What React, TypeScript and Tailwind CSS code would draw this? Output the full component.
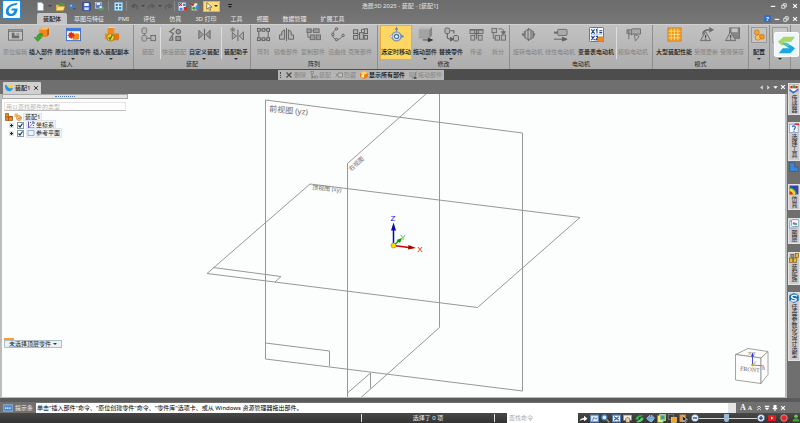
import React from "react";

type Node = React.ReactNode;

const GREY = "#6c6c6c";
const LIGHT = "#b4b4b4";

/* All glyphs are drawn on a 16 x 16 grid. */
const glyphs: Record<string, Node> = {
  editInPlace: (
    <>
      <rect x="0.500" y="3" width="15" height="11" fill="#c4c4c4" stroke={GREY} />
      <path d="M0.500 4.500h15" stroke={GREY} />
      <path d="M4 12V6h3v3h5v3z" fill={GREY} />
      <rect x="9" y="6.500" width="3" height="2" fill="#999" />
    </>
  ),
  insertPart: (
    <>
      <path d="M6 3l2-2h8v7l-2 2H6z" fill="#c85f10" />
      <path d="M6 3h8v7H6z" fill="#f08a1c" />
      <path d="M6 3l2-2h8l-2 2z" fill="#ffc35a" />
      <path d="M9 7C4 7 3 9 3 11.500L0 11l4 4.500L8.500 11l-2.500.5C6 10 7 9.500 9 9.500z" fill="#2fae2f" stroke="#157515" strokeWidth=".4" />
    </>
  ),
  createInPlace: (
    <>
      <rect x="0.500" y="1.500" width="15" height="13" fill="#fff" stroke="#3c6fc4" />
      <path d="M0.500 1.500h15v3H0.500z" fill="#3c7bdc" />
      <path d="M7 8l1-1h6v5l-1 1.500H7z" fill="#f08a1c" />
      <path d="M5.500 4.500l1 2 2-.7-.7 2 2 1-2 1 .7 2-2-.7-1 2-1-2-2 .7.7-2-2-1 2-1-.7-2 2 .7z" fill="#e3291d" />
    </>
  ),
  insertCopy: (
    <>
      <path d="M4 1h7v6H4z" fill="#f08a1c" />
      <path d="M4 1l1-1h7l-1 1z" fill="#ffd27a" />
      <path d="M10 8l1-1h5v6l-1 1h-5z" fill="#e5760f" />
      <path d="M1 7h5v6H1z" fill="#d99a1c" />
      <circle cx="7" cy="11" r="4" fill="#f2c83a" stroke="#87700f" strokeWidth=".8" />
      <path d="M5 11l1.500 2 2.500-5" stroke="#2b7d1f" fill="none" strokeWidth="1.300" />
    </>
  ),
  assemble: (
    <>
      <path d="M1 2c0-1.500 5-1.500 5 0v4c0 1.500-5 1.500-5 0z" fill={LIGHT} stroke={GREY} strokeWidth=".8" />
      <path d="M1 10c0-1.500 5-1.500 5 0v4c0 1.500-5 1.500-5 0z" fill={LIGHT} stroke={GREY} strokeWidth=".8" />
      <rect x="10.500" y="9" width="5" height="5.500" fill={LIGHT} stroke={GREY} />
      <path d="M3.500 7v2M6 12h4.500" stroke={GREY} />
    </>
  ),
  quick: (
    <>
      <path d="M8 1L3 5l4 2-4 6M2 14h4V10" stroke={GREY} fill="none" strokeWidth="1.300" />
      <circle cx="12" cy="5" r="2.500" fill="#999" stroke="#5f5f5f" />
      <rect x="9.500" y="10" width="5" height="4.500" fill="#999" stroke="#5f5f5f" />
    </>
  ),
  custom: (
    <>
      <path d="M8 2v12" stroke="#666" strokeWidth="1.300" />
      <path d="M2 3.500v9L6.500 8zM14 3.500v9L9.500 8z" fill="#999" stroke="#666" />
    </>
  ),
  assistant: (
    <>
      <path d="M4 0v6M1 3h6M2 1l4 4M6 1L2 5" stroke={GREY} strokeWidth=".8" />
      <path d="M9.500 3v12" stroke={GREY} strokeWidth="1.200" />
      <path d="M3.500 6v7L8 9.500zM15.500 5v9L11 9.500z" fill="#aaa" stroke={GREY} />
    </>
  ),
  pattern: (
    <g fill={LIGHT} stroke="#606060">
      <path d="M3 3h10v10H3z" fill="none" />
      <rect x="1.500" y="1.500" width="3" height="3" />
      <rect x="6.500" y="1.500" width="3" height="3" />
      <rect x="11.500" y="1.500" width="3" height="3" />
      <rect x="1.500" y="11.500" width="3" height="3" />
      <rect x="6.500" y="11.500" width="3" height="3" />
      <rect x="11.500" y="11.500" width="3" height="3" />
    </g>
  ),
  mirror: (
    <g fill={LIGHT} stroke="#606060">
      <path d="M8 1v14" />
      <path d="M6 3v10H0.500V8.500h2.500V5z" />
      <path d="M10 3v10h5.500V8.500H13V5z" />
    </g>
  ),
  copy: (
    <g fill="#999" stroke={GREY}>
      <rect x="1" y="2" width="4.500" height="4" />
      <rect x="8" y="2" width="6" height="4" />
      <rect x="4.500" y="8.500" width="5" height="5" />
      <rect x="11" y="8.500" width="4.500" height="5" />
      <path d="M2 6v5h2.500M8 4H5" fill="none" />
    </g>
  ),
  curve: (
    <g fill={LIGHT} stroke="#606060">
      <path d="M7 2C1 6 2 11 6 13c3 1 6-1 8-4" fill="none" />
      <circle cx="7" cy="2" r="1.300" />
      <circle cx="3" cy="8" r="1.300" />
      <circle cx="7" cy="13.500" r="1.300" />
      <circle cx="14" cy="9" r="1.300" />
    </g>
  ),
  clone: (
    <g fill={LIGHT} stroke="#606060">
      <rect x="0.500" y="3" width="4.500" height="4" />
      <rect x="0.500" y="9" width="4.500" height="4" />
      <rect x="7" y="6" width="4" height="7" />
      <rect x="12" y="2" width="3.500" height="5" />
      <rect x="12" y="9" width="3.500" height="4" />
      <path d="M5 8h2M9 6V2.500h3" fill="none" />
    </g>
  ),
  moveOnSelect: (
    <>
      <path d="M8 0v11M8 10h8" stroke="#7791b5" strokeWidth="1.200" />
      <path d="M6 3L8 0l2 3z" fill="#5f86bd" />
      <circle cx="8" cy="10" r="4.800" fill="#eadca0" stroke="#7b94b4" strokeWidth="1.500" />
      <circle cx="8" cy="10" r="2.200" fill="#eaf2ff" stroke="#3f6bb0" strokeWidth="1.200" />
      <path d="M13 8l3 2-3 2z" fill="#5f86bd" />
      <circle cx="2.500" cy="10" r="1.200" fill="#fff" stroke="#6d89b0" strokeWidth=".6" />
    </>
  ),
  drag: (
    <>
      <path d="M1 3l3-3h11v9l-3 3H1z" fill="#858585" />
      <path d="M1 3l3-3h11l-3 3z" fill="#b9b9b9" />
      <rect x="1" y="3" width="11" height="8.500" fill="#a2a2a2" />
      <path d="M5 13.800h7M11 12l4.500 1.800-4.500 1.800z" stroke="#333" fill="#333" strokeWidth=".9" />
    </>
  ),
  replace: (
    <g fill={LIGHT} stroke="#606060">
      <path d="M1 2c0-1.300 5-1.300 5 0v4c0 1.300-5 1.300-5 0z" />
      <path d="M10 10c0-1.300 5.500-1.300 5.500 0v4c0 1.300-5.500 1.300-5.500 0z" />
      <path d="M3.500 7v4c0 2 2 2 4 2M7 4h3.500v3" fill="none" strokeWidth="1.200" />
      <path d="M7 11l3 2-3 2z" fill="#606060" />
    </g>
  ),
  transfer: (
    <g fill={LIGHT} stroke={GREY}>
      <rect x="1" y="3" width="5" height="4" />
      <rect x="10" y="3" width="5" height="4" />
      <rect x="2" y="9" width="4" height="5" />
      <rect x="10" y="9" width="4" height="5" />
      <path d="M1 3h14M8 3v10M5 7h6" strokeWidth="1.500" />
    </g>
  ),
  disperse: (
    <g fill={LIGHT} stroke={GREY}>
      <rect x="1" y="1.500" width="5" height="4.500" />
      <rect x="4.500" y="9" width="4.500" height="5" />
      <rect x="11" y="8.500" width="4.500" height="5.500" />
      <path d="M2.500 6v6h2M8 2h3c2 0 2.500 2 2.500 4" fill="none" />
      <path d="M11 5h4.500l-2.200 2.800z" fill={GREY} />
    </g>
  ),
  rotary: (
    <>
      <path d="M1 8h14" stroke={GREY} strokeWidth="2.200" />
      <path d="M3.500 5l3-2h4l3 2v6l-3 2h-4l-3-2z" fill="#8e8e8e" stroke={GREY} />
      <path d="M6 4v8M9 3.500v9" stroke="#bdbdbd" />
      <path d="M8 1v2M8 13v2" stroke={GREY} strokeWidth="1.500" />
    </>
  ),
  linear: (
    <>
      <rect x="5" y="2.500" width="10" height="6.500" rx="1" fill="#aaa" stroke={GREY} />
      <path d="M1 6h4" stroke={GREY} strokeWidth="2.200" />
      <path d="M1 13h10M10 11l5 2-5 2z" stroke="#606060" fill="#606060" />
    </>
  ),
  table: (
    <>
      <rect x="0.500" y="0.500" width="15" height="15" rx="1" fill="#f6faff" stroke="#4a73ad" />
      <path d="M2 8h12" stroke="#9bb4d8" strokeWidth=".6" />
      <path d="M2.500 2.500l3.500 4.500M6 2.500L2.500 7M2.500 9.500L6 14M6 9.500L2.500 14M7.500 3.500L8.500 2.500V7M7.500 10h1.500v1.500l-1.500 2h2M11 4h3M11 6h3" stroke="#1b3d87" fill="none" strokeWidth="1.100" />
      <path d="M9 12l1-1.500h6V14l-1 2H9z" fill="#f08a1c" stroke="#a9570b" strokeWidth=".4" />
    </>
  ),
  simulate: (
    <>
      <path d="M1 3h4l2-1h8.500v5.500H5L1 7z" fill="#aaa" stroke={GREY} />
      <path d="M3 3v10M6 3v6M9 8l5 2-4 5z" fill="#c2c2c2" stroke="#6f6f6f" />
    </>
  ),
  grid: (
    <>
      <rect x="1" y="1" width="14" height="14" fill="#f39a1d" />
      <path d="M1 1h14v14H1zM4.500 1v14M8 1v14M11.500 1v14M1 4.500h14M1 8h14M1 11.500h14" fill="none" stroke="#ffe78c" strokeWidth=".8" />
      <path d="M1 1h14v14H1z" fill="none" stroke="#c96a0b" strokeWidth="1" />
    </>
  ),
  limitUpdate: (
    <>
      <path d="M1.500 14.500L7 5l5.500 9.500z" fill="#b5b5b5" stroke={GREY} />
      <path d="M7 8.500v3M7 12.500v1" stroke="#4d4d4d" strokeWidth="1.300" />
      <path d="M4 8c0-4 4-5 8-5" stroke={GREY} fill="none" strokeWidth="1.500" />
      <path d="M11 0l5 3-5 3z" fill={GREY} />
    </>
  ),
  limitSave: (
    <>
      <rect x="5" y="1" width="10.500" height="11" fill="#868686" stroke="#6f6f6f" />
      <rect x="7" y="1.500" width="6.500" height="4" fill="#c4c4c4" />
      <path d="M0.500 14.500L6 5l5.500 9.500z" fill="#b5b5b5" stroke={GREY} />
      <path d="M6 8.500v3M6 12.500v1" stroke="#4d4d4d" strokeWidth="1.300" />
    </>
  ),
  config: (
    <>
      <path d="M3 3l2.500-1L8 3v4L5.500 8 3 7z" fill="#f7a431" stroke="#b0670c" strokeWidth=".6" />
      <path d="M4 9l3.500-1.500L10 9v3.500L7 14l-3-1z" fill="#ffc052" stroke="#b0670c" strokeWidth=".6" />
      <circle cx="11.500" cy="10" r="2.800" fill="#f59722" stroke="#b0670c" strokeWidth=".6" />
    </>
  ),
  doc: <path d="M3 1h7l3 3v11H3z" fill="#fff" stroke="#9db4cc" />,
  folder: (
    <>
      <path d="M0 5h5l1 2h7v8H0z" fill="#e9b63a" />
      <path d="M3 8h13l-3 7H0z" fill="#ffe28a" stroke="#a97b12" strokeWidth=".6" />
      <path d="M6 5c1-4 5-4 7-2l1.500-1L15 7l-4.500-1 1-1C10 4 8 4 8 6z" fill="#49a633" />
    </>
  ),
  ball: (
    <>
      <circle cx="7" cy="8" r="4.500" fill="#3d7fbd" />
      <circle cx="5.500" cy="6.500" r="1.500" fill="#a8d5ff" />
      <path d="M9 12h5" stroke="#333" />
    </>
  ),
  save: (
    <>
      <rect x="1" y="1" width="14" height="14" rx="1" fill="#3f62c4" stroke="#203b8c" />
      <rect x="4" y="2" width="8" height="5" fill="#fff" />
      <rect x="4" y="9.500" width="8" height="5" fill="#cdd9f2" />
    </>
  ),
  saveAs: (
    <>
      <rect x="1" y="1" width="10" height="10" fill="#5a7bd0" stroke="#dfe8ff" />
      <rect x="3" y="2" width="6" height="3" fill="#fff" />
      <path d="M6 11l8-4 2 5-6 4z" fill="#52b152" />
      <circle cx="10" cy="9" r="3" fill="#e8f0ff" stroke="#3460a0" />
    </>
  ),
  panel: (
    <>
      <rect x="0.500" y="0.500" width="15" height="15" rx="1" fill="#d6ecf8" stroke="#4f90b5" />
      <path d="M3 3h4v4H3zM9 3h4v4H9zM3 9h4v4H3zM9 9h4v4H9z" fill="#3186b8" />
    </>
  ),
  undo: <path d="M13 13c2-6-3-9-8-6M8 3L3 8l6 2" stroke="#555" fill="none" strokeWidth="2.200" />,
  redo: <path d="M3 13c-2-6 3-9 8-6M8 3l5 5-6 2" stroke="#5b5b5b" fill="none" strokeWidth="2.200" />,
  colorA: (
    <>
      <rect x="1" y="1" width="13" height="14" fill="#eef4ff" stroke="#7a93be" />
      <path d="M2 2l5 5M7 2L2 7" stroke="#d8281d" strokeWidth="2" />
      <path d="M9 3h4v4H9zM3 10h5v4H3z" fill="#3f7fd0" />
      <path d="M10 9h6v6h-6z" fill="#d8281d" />
    </>
  ),
  colorB: (
    <>
      <path d="M3 2h10v13H3z" fill="#fff" stroke="#888" />
      <path d="M0 2h9L5 8z" fill="#d8281d" />
      <circle cx="7" cy="11" r="3" fill="#38a13f" />
      <path d="M10 6h5v8h-5z" fill="#3d8fd8" />
    </>
  ),
  cursor: <path d="M5 1v12l3-3 2 5 2-1-2-5h4z" fill="#fff" stroke="#333" />,
  partTab: (
    <>
      <path d="M0 2c5 0 5 3 6 5l10 1c-1 6-7 8-12 5C1 11 0 8 0 2z" fill="#2493e8" />
      <circle cx="11" cy="5" r="4" fill="#ffd21f" />
    </>
  ),
  cross: <path d="M3 3l10 10M13 3L3 13" stroke="currentColor" strokeWidth="2.300" />,
  link: (
    <g fill="#bbb" stroke="#666">
      <rect x="2" y="1" width="5" height="4" />
      <rect x="10" y="10" width="5" height="4" />
      <path d="M4 5v7h6M2 14h4" fill="none" strokeWidth="1.500" />
    </g>
  ),
  hide: <path d="M1 5l4 3-4 3M6 4h9v8H6z" stroke="#777" fill="#c2c2c2" strokeWidth="1.500" />,
  showAll: (
    <>
      <path d="M0 4l8-4 8 4v8l-8 4-8-4z" fill="#f07c12" />
      <path d="M0 4l8-4 8 4-8 4z" fill="#ffd166" />
      <path d="M3 7h5v6H3z" fill="#fff3cf" />
    </>
  ),
  asmRoot: (
    <>
      <path d="M1 1h6v6h8v8H1z" fill="#ed8a1d" stroke="#8d470a" strokeWidth="1.300" />
      <path d="M1 8h14M7 8v7" stroke="#8d470a" strokeWidth="1.300" />
    </>
  ),
  asmNode: (
    <>
      <path d="M1 1h7v7H1z" fill="#f1b563" />
      <circle cx="10" cy="10" r="5" fill="#f7d18a" stroke="#c7781f" strokeWidth="1.300" />
      <path d="M8 10l2 2 3-4" stroke="#b95510" fill="none" strokeWidth="1.500" />
    </>
  ),
  coords: (
    <>
      <path d="M3 1v13h12" stroke="#6655b8" fill="none" strokeWidth="2" />
      <path d="M4 13l8-9" stroke="#ae448e" strokeWidth="1.500" />
      <path d="M10 2h4v4M6 3h2M12 9h2" stroke="#3a55bd" fill="none" strokeWidth="2" />
    </>
  ),
  plane: <path d="M2 3h12v10H2z" fill="#eef3ff" stroke="#7f9ada" strokeWidth="1.500" />,
  sensor: (
    <>
      <path d="M0.500 1h15v11H0.500z" fill="#fff" stroke="#9d9d9d" />
      <path d="M2 3h4v4H2z" fill="#d8281d" />
      <path d="M6 2h4v5H6z" fill="#35a845" />
      <path d="M10 3h4v4h-4z" fill="#d8281d" />
      <path d="M1 9l6 5 8-6" stroke="#3a6cc6" fill="none" strokeWidth="2.500" />
    </>
  ),
  pick: (
    <>
      <rect x="0.500" y="2" width="14" height="13" fill="#f4f8ff" stroke="#6a92cc" />
      <path d="M9 0.500h7v3H9z" fill="#d93a30" />
      <path d="M5 6c3-3 7 0 4 3l-1 2M8 12.500v1.500" stroke="#3566b3" strokeWidth="2" fill="none" />
    </>
  ),
  shape: <path d="M1 1h8v7h5c2 2 1 6 0 7H1z" fill="#3f86cf" stroke="#1d569b" />,
  rainbow: (
    <>
      <rect x="1" y="1" width="14" height="14" fill="#3340b4" />
      <path d="M1 15V4c6 0 11 5 11 11z" fill="#3fae5c" />
      <path d="M1 15V6c5 0 9 4 9 9z" fill="#ffd72c" />
      <path d="M1 15v-5c3 0 5 2 5 5z" fill="#e52c1c" />
    </>
  ),
  layers: (
    <>
      <rect x="0.500" y="3.500" width="11" height="11" rx="2" fill="#d9ecff" stroke="#4c86c0" />
      <rect x="4" y="1" width="11.500" height="11" rx="2" fill="#f3fbff" stroke="#4c86c0" />
      <circle cx="8" cy="7" r="2" fill="#e05a4c" />
      <circle cx="11" cy="8" r="2" fill="#49b35f" />
    </>
  ),
  family: (
    <g stroke="#554312" strokeWidth=".8">
      <rect x="0.500" y="8" width="5.500" height="7" fill="#e7b43c" />
      <rect x="7" y="8" width="5.500" height="7" fill="#e7b43c" />
      <rect x="3" y="2" width="5" height="5" fill="#8994a5" />
      <rect x="10" y="1" width="5.500" height="6" fill="#e7b43c" />
    </g>
  ),
  swirl: (
    <>
      <path d="M8 0l7.500 4v8L8 16 .5 12V4z" fill="#0b6fb8" />
      <path d="M13 5C8 2 3 4 4.500 7s8 1 7 4-6 2-8.500 0" stroke="#fff" fill="none" strokeWidth="2.200" />
    </>
  ),
  arrowRight: <path d="M1 13c1-5 4-6 8-6V3l6 5.500L9 13v-3c-4 0-6 0-8 3z" fill="#fff" />,
  fit: (
    <>
      <rect x="1" y="2" width="14" height="12" fill="#dcebfb" stroke="#5b8dc8" strokeWidth="2" />
      <path d="M4 12l3-6 3 3 3-2" stroke="#3a6cc6" fill="none" strokeWidth="1.500" />
    </>
  ),
  zoomGlass: (
    <>
      <circle cx="6" cy="6" r="4.500" fill="#d6ecff" stroke="#3c7fc4" strokeWidth="2" />
      <path d="M9.500 9.500L15 15" stroke="#c98b4a" strokeWidth="2.500" />
    </>
  ),
  fitAll: (
    <>
      <rect x="1" y="2" width="14" height="12" fill="#f2f8ff" stroke="#4d86cb" strokeWidth="2" />
      <path d="M4 5l8 6M12 5l-8 6" stroke="#2c5da8" strokeWidth="2" />
    </>
  ),
  pan: (
    <>
      <rect x="1" y="2" width="14" height="9" fill="#eee" stroke="#8aa" />
      <path d="M5 15V8l2-2 5 2v7z" fill="#f2cfa4" stroke="#6b4a20" />
    </>
  ),
  orbit: (
    <>
      <path d="M1 10c0-7 9-9 14-7l-4 2c-4 0-5 3-4 5z" fill="#32b04c" />
      <path d="M15 6c0 7-8 10-13 8l4-3c3 0 4-2 4-4z" fill="#5fd06b" />
    </>
  ),
  lookAt: <path d="M1 8l6-6v4h3V2l5 5-5 7v-4H8v4z" fill="#5ea3e6" stroke="#d2e8ff" />,
  views: (
    <>
      <rect x="1" y="3" width="10" height="12" fill="#ffe36e" stroke="#6e9f30" />
      <rect x="5" y="1" width="10" height="11" fill="#7ecb55" stroke="#e4ffd8" />
      <circle cx="10" cy="6" r="3" fill="#3e8ad0" />
    </>
  ),
  style: (
    <>
      <rect x="1" y="1" width="9" height="9" fill="#3c3c3c" stroke="#999" />
      <rect x="6" y="6" width="9" height="9" fill="#f2a81e" stroke="#ffe1a0" />
    </>
  ),
  selectStyle: (
    <>
      <rect x="1" y="1" width="11" height="13" fill="#ed9430" />
      <path d="M6 3v10l3-2 2 4 2-1-2-4h4z" fill="#222" stroke="#eee" />
    </>
  ),
  minus: (
    <>
      <circle cx="8" cy="8" r="7" fill="#e8f1fb" stroke="#55759c" />
      <path d="M4 8h8" stroke="#1d3f70" strokeWidth="2.500" />
    </>
  ),
  plus: (
    <>
      <circle cx="8" cy="8" r="7" fill="#e8f1fb" stroke="#55759c" />
      <path d="M4 8h8M8 4v8" stroke="#1d3f70" strokeWidth="2.500" />
    </>
  ),
  video: (
    <>
      <rect x="0" y="2" width="16" height="12" rx="2" fill="#e3191c" />
      <path d="M6 5l5 3-5 3z" fill="#fff" />
    </>
  ),
  record: <circle cx="8" cy="8" r="6.500" fill="#e02a2a" stroke="#f3a5a5" strokeWidth="1.500" />,
  person: (
    <>
      <circle cx="8" cy="4.500" r="3.500" fill="#6cc644" />
      <path d="M1 15c0-8 14-8 14 0z" fill="#4ea32e" />
    </>
  ),
  minimize: <path d="M2 9h12" stroke="#fff" strokeWidth="3" />,
  restore: <path d="M6 6V2h8v8h-4M2 6h8v8H2z" stroke="#fff" fill="none" strokeWidth="2" />,
  close: <path d="M3 3l10 10M13 3L3 13" stroke="#fff" strokeWidth="3" />,
  left: <path d="M12 1L4 8l8 7z" fill="#ddd" />,
  right: <path d="M4 1l8 7-8 7z" fill="#ddd" />,
  down: <path d="M1 4h14l-7 8z" fill="#fff" />,
  collapse: <path d="M3 7l5-4 5 4M3 13l5-4 5 4" stroke="#fff" fill="none" strokeWidth="2" />,
  menuDown: <path d="M2 2h12v3H2zM2 7h12l-6 7z" fill="#fff" />,
  pin: <path d="M4 0h8v8h2v3H9.500v5h-3v-5H2V8h2z" fill="#fff" />,
  promptBar: (
    <>
      <rect x="0" y="3" width="16" height="10" fill="#4f86c8" stroke="#b9d5f3" />
      <path d="M3 8h10" stroke="#fff" strokeWidth="2" strokeDasharray="2 1" />
    </>
  ),
};

function Icon({ name, className = "size-[8px]" }: { name: string; className?: string }) {
  return (
    <svg viewBox="0 0 16 16" className={`shrink-0 ${className}`} aria-hidden="true">
      {glyphs[name]}
    </svg>
  );
}

function Caret({ color = "#333" }: { color?: string }) {
  return (
    <svg viewBox="0 0 4 2" className="h-[2px] w-[4px] shrink-0" aria-hidden="true">
      <path d="M0 0h4L2 2z" fill={color} />
    </svg>
  );
}

type Tool = { label: string; icon: string; w: string; on?: boolean; menu?: boolean; active?: boolean; rule?: boolean };

const groups: { name: string; w: string; tools: Tool[] }[] = [
  {
    name: "插入",
    w: "w-[134px]",
    tools: [
      { label: "原位编辑", icon: "editInPlace", w: "w-[26px]" },
      { label: "插入部件", icon: "insertPart", w: "w-[26px]", on: true, menu: true },
      { label: "原位创建零件", icon: "createInPlace", w: "w-[38px]", on: true, menu: true },
      { label: "插入装配副本", icon: "insertCopy", w: "w-[38px]", on: true, menu: true },
    ],
  },
  {
    name: "装配",
    w: "w-[117px]",
    tools: [
      { label: "装配", icon: "assemble", w: "w-[24px]", rule: true },
      { label: "快速装配", icon: "quick", w: "w-[26px]" },
      { label: "自定义装配", icon: "custom", w: "w-[34px]", on: true, menu: true, rule: true },
      { label: "装配助手", icon: "assistant", w: "w-[28px]", on: true, menu: true },
    ],
  },
  {
    name: "阵列",
    w: "w-[127px]",
    tools: [
      { label: "阵列", icon: "pattern", w: "w-[20px]" },
      { label: "镜像部件", icon: "mirror", w: "w-[26px]" },
      { label: "复制部件", icon: "copy", w: "w-[28px]" },
      { label: "沿曲线", icon: "curve", w: "w-[20px]" },
      { label: "克隆部件", icon: "clone", w: "w-[26px]" },
    ],
  },
  {
    name: "修改",
    w: "w-[132px]",
    tools: [
      { label: "选定时移动", icon: "moveOnSelect", w: "w-[32px]", on: true, active: true },
      { label: "拖动部件", icon: "drag", w: "w-[26px]", on: true, menu: true },
      { label: "替换零件", icon: "replace", w: "w-[26px]", on: true, menu: true },
      { label: "传递", icon: "transfer", w: "w-[24px]" },
      { label: "拆分", icon: "disperse", w: "w-[20px]" },
    ],
  },
  {
    name: "电动机",
    w: "w-[143px]",
    tools: [
      { label: "旋转电动机", icon: "rotary", w: "w-[32px]" },
      { label: "线性电动机", icon: "linear", w: "w-[32px]" },
      { label: "变量表电动机", icon: "table", w: "w-[40px]", on: true, rule: true },
      { label: "模拟电动机", icon: "simulate", w: "w-[32px]" },
    ],
  },
  {
    name: "模式",
    w: "w-[96px]",
    tools: [
      { label: "大型装配性能", icon: "grid", w: "w-[38px]", on: true },
      { label: "受限更新", icon: "limitUpdate", w: "w-[26px]" },
      { label: "受限保存", icon: "limitSave", w: "w-[26px]" },
    ],
  },
];

function ToolButton({ tool }: { tool: Tool }) {
  return (
    <>
      <button
        type="button"
        disabled={!tool.on}
        className={`flex h-[35px] shrink-0 flex-col items-center whitespace-nowrap pt-[2px] ${tool.w} ${
          tool.on ? "font-medium text-[#151515]" : "text-[#828282]"
        } ${tool.active ? "bg-[#fdd663] outline outline-1 -outline-offset-1 outline-[#e0b040]" : ""}`}
      >
        <Icon name={tool.icon} className="size-[15px]" />
        <span className="mt-[6px] leading-[8px]">{tool.label}</span>
        {tool.menu && (
          <span className="mt-[2px]">
            <Caret />
          </span>
        )}
      </button>
      {tool.rule && <span className="mt-[2px] h-[32px] w-px shrink-0 bg-[#dedede]" />}
    </>
  );
}

function Ribbon() {
  return (
    <div className="flex h-[45px] shrink-0 overflow-hidden border-t border-[#d0d0d0] bg-linear-to-b from-[#c2c2c2] to-[#adadad]">
      {groups.map((g) => (
        <section key={g.name} aria-label={g.name} className={`flex shrink-0 flex-col border-r border-[#8e8e8e] ${g.w}`}>
          <div className="flex pl-[2px]">
            {g.tools.map((t) => (
              <ToolButton key={t.label} tool={t} />
            ))}
          </div>
          <h2 className="text-center leading-[8px] text-[#222]">{g.name}</h2>
        </section>
      ))}
      <div className="flex w-[21px] shrink-0 flex-col items-center border-r border-[#8e8e8e] pt-[2px]">
        <button type="button" className="flex flex-col items-center font-medium text-[#151515]">
          <span className="border border-[#999] bg-[#c6c6c6]">
            <Icon name="config" className="size-[14px]" />
          </span>
          <span className="mt-[5px] leading-[8px]">配置</span>
          <span className="mt-[2px]">
            <Caret />
          </span>
        </button>
      </div>
      <div className="relative flex w-[21px] shrink-0 flex-col items-center border-r border-[#8e8e8e] pt-[2px]">
        <span className="size-[16px] border border-[#999] bg-[#c6c6c6]" />
        <span className="mt-[15px]">
          <Caret />
        </span>
        <div className="absolute top-[7px] left-[4px] size-[25px] rounded-[2px] border border-white bg-[#eef6fa]">
          <svg viewBox="0 0 24 24" className="size-full" aria-hidden="true">
            <path d="M9 4h12l-4 5H9l3 2-5 2-4-4z" fill="#a5d86a" />
            <path d="M12 10l8 5-4 2-9-6z" fill="#4cc3b4" />
            <path d="M16 13l5 3-5 5H4l4-5h8l-3-2z" fill="#1ba7e4" />
          </svg>
        </div>
      </div>
    </div>
  );
}

const tabs = ["装配体", "草图与特征", "PMI", "评估", "仿真", "3D 打印", "工具", "视图", "数据管理", "扩展工具"];

function QuickButton({ icon, label, w }: { icon: string; label: string; w: string }) {
  return (
    <button type="button" aria-label={label} className={`flex shrink-0 items-center justify-center ${w}`}>
      <Icon name={icon} className="size-[9px]" />
    </button>
  );
}

function Header() {
  return (
    <header className="relative shrink-0 bg-linear-to-b from-[#6b6b6b] to-[#777]">
      <div className="flex h-[12px] items-center">
        <div className="h-full min-w-0 flex-1 basis-0">
          <div className="flex h-full items-center pl-[35px]">
            <QuickButton icon="doc" label="新建" w="w-[10px]" />
            <span className="flex w-[10px] justify-center"><Caret color="#444" /></span>
            <QuickButton icon="folder" label="打开" w="w-[10px]" />
            <QuickButton icon="ball" label="在线" w="w-[14px]" />
            <QuickButton icon="save" label="保存" w="w-[14px]" />
            <QuickButton icon="saveAs" label="另存为" w="w-[12px]" />
            <span className="mx-[3px] h-[10px] w-px bg-[#8a8a8a]" />
            <QuickButton icon="panel" label="面板" w="w-[12px]" />
            <span className="mx-[2px] h-[10px] w-px bg-[#8a8a8a]" />
            <QuickButton icon="undo" label="撤销" w="w-[10px]" />
            <span className="flex w-[7px] justify-center"><Caret color="#444" /></span>
            <QuickButton icon="redo" label="重做" w="w-[10px]" />
            <span className="flex w-[7px] justify-center"><Caret color="#444" /></span>
            <QuickButton icon="redo" label="重复" w="w-[10px]" />
            <span className="mx-[1px] h-[10px] w-px bg-[#8a8a8a]" />
            <QuickButton icon="colorA" label="颜色" w="w-[12px]" />
            <QuickButton icon="colorB" label="样式" w="w-[12px]" />
            <span className="ml-[3px] flex h-[11px] w-[17px] items-center justify-between border border-[#e2b33c] bg-[#fddb76] pr-[1px]">
              <QuickButton icon="cursor" label="选择" w="w-[9px]" />
              <Caret />
            </span>
            <span className="ml-[8px] border-t border-[#222] pt-[1px]"><Caret color="#222" /></span>
          </div>
        </div>
        <h1 className="leading-[12px] text-[#e6e6e6]">浩辰3D 2025 - 装配 - [装配1]</h1>
        <div className="min-w-0 flex-1 basis-0">
          <div className="flex items-center justify-end gap-[5px] pr-[2px]">
            <button type="button" aria-label="最小化"><Icon name="minimize" className="size-[6px]" /></button>
            <button type="button" aria-label="还原"><Icon name="restore" className="size-[6px]" /></button>
            <button type="button" aria-label="关闭"><Icon name="close" className="size-[6px]" /></button>
          </div>
        </div>
      </div>
      <div className="flex h-[12px] items-end">
        <nav className="flex flex-1 pl-[37px]">
          {tabs.map((t, i) => (
            <button
              key={t}
              type="button"
              className={`h-[11px] ${
                i === 0 ? "rounded-t-[2px] bg-[#c6c6c6] px-[6px] font-medium text-[#222]" : "px-[7px] text-[#ececec]"
              }`}
            >
              {t}
            </button>
          ))}
        </nav>
        <div className="flex h-[11px] items-center gap-[3px] pr-[2px]">
          <button type="button" aria-label="帮助" className="size-[7px] bg-[#2f6fc4] font-bold text-white">?</button>
          <button type="button" aria-label="最小化文档"><Icon name="minimize" className="size-[6px]" /></button>
          <button type="button" aria-label="还原文档"><Icon name="restore" className="size-[6px]" /></button>
          <button type="button" aria-label="关闭文档"><Icon name="close" className="size-[6px]" /></button>
        </div>
      </div>
      <div className="absolute top-0 left-[2px] size-[19px] rounded-[2px] border border-[#1c8edb] bg-white">
        <svg viewBox="0 0 18 18" className="size-full" aria-hidden="true">
          <path d="M15.500 2C8 2 3 6 3 11c0 4 3 5 6 5 4 0 6-3 6.500-8H9.500l-1 2h3.500c-.5 2-1.500 3.500-3 3.500S6 12.500 6 10.500C6 7 9 4.500 14 4.500z" fill="#168de0" />
        </svg>
      </div>
    </header>
  );
}

const commands = [
  { icon: "cross", label: "删除" },
  { icon: "link", label: "装配" },
  { icon: "hide", label: "隐藏" },
  { icon: "showAll", label: "显示所有部件", on: true },
  { icon: "drag", label: "拖动部件" },
];

function CommandStrip() {
  return (
    <div className="flex h-[11px] shrink-0 items-end bg-[#4d4d4d]">
      <div className="ml-[278px] flex h-[10px] items-center gap-[4px] bg-[#b5b5b5] px-[2px]">
        <span className="h-[6px] border-l border-dotted border-[#444]" />
        {commands.map((c) => (
          <button
            key={c.label}
            type="button"
            disabled={!c.on}
            className={`flex items-center gap-[1px] ${c.on ? "font-medium text-black" : "text-[#858585]"}`}
          >
            <Icon name={c.icon} className="size-[8px] text-[#4a4a4a]" />
            {c.label}
          </button>
        ))}
      </div>
    </div>
  );
}

function Expand() {
  return (
    <button type="button" aria-label="展开" className="flex size-[5px] items-center justify-center bg-[#dbe3e8]">
      <svg viewBox="0 0 5 5" className="size-[5px] shrink-0" aria-hidden="true">
        <path d="M1 2.500h3M2.500 1v3" stroke="#222" />
      </svg>
    </button>
  );
}

function TreeRow({ icon, label }: { icon: string; label: string }) {
  return (
    <li className="flex h-[8px] items-center pl-[5px]">
      <Expand />
      <label className="ml-[3px] flex items-center">
        <span className="relative flex">
          <input type="checkbox" defaultChecked className="size-[7px] appearance-none border border-[#8299a8] bg-white" />
          <svg viewBox="0 0 7 7" className="pointer-events-none absolute inset-0 size-[7px]" aria-hidden="true">
            <path d="M1.500 3.500L3 5l2.500-3.500" stroke="#16315c" fill="none" strokeWidth="1.200" />
          </svg>
        </span>
        <span className="ml-[2px] flex items-center gap-[1px] border border-[#dde6ea] bg-[#eef3f5] pr-[1px] leading-[6px]">
          <Icon name={icon} className="size-[8px]" />
          {label}
        </span>
      </label>
    </li>
  );
}

function PathFinder() {
  return (
    <aside className="flex w-[126px] shrink-0 flex-col text-[#222]">
      <div className="flex h-[5px] items-center justify-center border border-[#a9a9a9] bg-[#e4e4e4]">
        <span className="w-[20px] border-t border-dotted border-[#4c7fc4]" />
      </div>
      <input
        aria-label="查找部件"
        placeholder="用以查找部件的类型"
        className="mx-[2px] mt-[3px] h-[9px] border border-[#e4e4e4] border-b-[#bdbdbd] bg-white px-[1px] placeholder:text-[#b5b5b5]"
      />
      <ul className="mt-[2px] pl-[2px]">
        <li className="flex h-[8px] items-center gap-[1px] pl-[1px]">
          <Icon name="asmRoot" />
          <Icon name="asmNode" />
          <span className="border border-[#dde6ea] bg-[#eef3f5] px-[1px] leading-[6px]">装配1</span>
        </li>
        <TreeRow icon="coords" label="坐标系" />
        <TreeRow icon="plane" label="参考平面" />
      </ul>
      <div className="mt-auto mb-[49px] pl-[2px]">
        <div className="h-[2px] w-[10px] bg-[#f79a3c]" />
        <button type="button" className="flex h-[8px] w-[58px] items-center justify-center border border-[#aebfc6] bg-[#e9f1f3]">
          未选择顶层零件<span className="ml-[2px]"><Caret /></span>
        </button>
      </div>
    </aside>
  );
}

/* Model space: three reference planes, the origin triad and the view cube. */
function Viewport() {
  return (
    <svg viewBox="128 94 657 304" preserveAspectRatio="xMidYMid slice" className="h-full min-w-0 flex-1" role="img" aria-label="模型视图">
      <g fill="none" stroke="#979797" strokeWidth="1">
        <path d="M265.500 100.500L522.500 133.500V391.500L265.500 359.500z" />
        <path d="M265.500 343.500L329.500 351.500V366.500" />
        <path d="M310 184.500L580 218L477.500 308L207 274z" />
        <path d="M213 268L281 277L275 282.500" />
        <path d="M426.500 94L347.500 164V398M439.500 94V328L361 398" />
        <path d="M347.500 393.500L370.500 373.500V389" />
      </g>
      <g fill="#6f6f6f">
        <text x="269" y="112" fontSize="8" transform="rotate(5 269 112)">前视图 (yz)</text>
        <text x="312" y="190" fontSize="6" transform="rotate(5 312 190)">顶视图 (xy)</text>
        <text x="351" y="172" fontSize="6" transform="rotate(-42 351 172)">右视图</text>
      </g>
      <g strokeWidth="1.500">
        <path d="M393.500 246V230" stroke="#0808b0" />
        <path d="M391 231L393.500 223L396 231z" fill="#0808b0" />
        <path d="M393.500 246L409 248" stroke="#d00000" />
        <path d="M408.500 245.500L416 248.500L408 250z" fill="#b00000" />
        <path d="M394 246L399 241" stroke="#00a000" />
        <path d="M396.500 240.500L402 238.500L400 243.500z" fill="#00a000" />
        <circle cx="393.500" cy="246" r="2.500" fill="#f0e000" stroke="#908600" strokeWidth=".6" />
      </g>
      <g fontSize="8" textAnchor="middle" className="font-['Liberation_Sans',sans-serif]">
        <text x="393" y="221" fill="#1010e0">Z</text>
        <text x="403" y="240" fill="#12c812">Y</text>
        <text x="420" y="252" fill="#e01010">X</text>
      </g>
      <g fill="#fdfdfd" stroke="#8b8b8b" strokeWidth=".8">
        <path d="M735.500 355L748 349L768 352L761 358.500z" />
        <path d="M735.500 355L761 358.500V384L735.500 380.500z" />
        <path d="M761 358.500L768 352V375L761 384z" />
      </g>
      <g fill="#666" className="font-['Liberation_Serif',serif]">
        <text x="740" y="371" fontSize="6" transform="rotate(5 740 371)">FRONT</text>
        <text x="748" y="355" fontSize="4">TOP</text>
        <text x="762" y="370" fontSize="5">R</text>
      </g>
      <path d="M752.500 365V355" stroke="#5050e8" />
      <path d="M751 357L752.500 353L754 357z" fill="#3030e0" />
      <path d="M752.500 365.500L764 366.500" stroke="#e06060" />
      <path d="M753 365L756 362" stroke="#50d050" />
      <circle cx="752.500" cy="365.500" r="1.300" fill="#c9a800" />
    </svg>
  );
}

const dock = [
  { icon: "sensor", label: "传感器", gap: "mb-[7px]", h: "h-[32px]" },
  { icon: "pick", label: "选择工具", gap: "mb-[1px]", h: "h-[39px]" },
  { icon: "shape", label: "", gap: "mb-[9px]", h: "h-[13px]" },
  { icon: "rainbow", label: "仿真", gap: "mb-[8px]", h: "h-[26px]" },
  { icon: "layers", label: "图层", gap: "mb-[8px]", h: "h-[26px]" },
  { icon: "family", label: "装配族", gap: "mb-[7px]", h: "h-[33px]" },
  { icon: "swirl", label: "佳盘参数化设计选型", gap: "mb-0", h: "h-[69px]" },
];

function Dock() {
  return (
    <nav aria-label="工具面板" className="flex w-[13px] shrink-0 flex-col bg-[#6f6f6f] pt-[3px] pl-[1px]">
      {dock.map((d) => (
        <button
          key={d.icon}
          type="button"
          aria-label={d.label || "零件库"}
          className={`flex w-[12px] shrink-0 flex-col items-center gap-[1px] ${d.gap} ${d.h} ${
            d.label ? "border border-[#e2e2e2] bg-[#cdcdcd]" : ""
          }`}
        >
          <Icon name={d.icon} className="size-[10px]" />
          <span className="leading-[8px] text-[#222] [text-orientation:upright] [writing-mode:vertical-rl]">{d.label}</span>
        </button>
      ))}
    </nav>
  );
}

function Workspace() {
  return (
    <main className="flex min-h-0 flex-1 bg-[#6f6f6f]">
      <div className="flex min-w-0 flex-1 flex-col">
        <div className="flex h-[14px] shrink-0 items-end justify-between">
          <div className="ml-[3px] flex h-[12px] items-center gap-[2px] rounded-t-[1px] bg-[#d0d0d0] px-[2px] font-medium text-[#222]">
            <Icon name="partTab" className="size-[8px]" />
            <span className="leading-[10px]">装配1</span>
            <button type="button" aria-label="关闭标签" className="ml-[1px] flex">
              <Icon name="cross" className="size-[6px]" />
            </button>
          </div>
          <div className="flex h-[14px] items-center gap-[2px] pr-[1px]">
            <button type="button" aria-label="上一个"><Icon name="left" className="size-[5px]" /></button>
            <button type="button" aria-label="下一个"><Icon name="right" className="size-[5px]" /></button>
            <button type="button" aria-label="列表"><Icon name="down" className="size-[5px]" /></button>
            <button type="button" aria-label="关闭视图"><Icon name="close" className="size-[6px]" /></button>
          </div>
        </div>
        <div className="flex min-h-0 flex-1 border-x-2 border-b border-[#bcbcbc] bg-[#fcfdfd]">
          <PathFinder />
          <Viewport />
        </div>
      </div>
      <Dock />
    </main>
  );
}

function PromptBar() {
  return (
    <div className="flex h-[15px] shrink-0 items-center border-t-4 border-[#5b5b5b] bg-[#707070]">
      <div className="flex w-[36px] items-center gap-[2px] pl-[3px] text-[#f0f0f0]">
        <Icon name="promptBar" className="size-[10px]" />
        <span className="leading-[8px] whitespace-nowrap">提示条</span>
      </div>
      <p className="h-[10px] flex-1 truncate border-r-8 border-[#e4e4e4] bg-white pl-[1px] leading-[11px] text-black">
        单击"插入部件"命令、"原位创建零件"命令、"零件库"选项卡、或从 Windows 资源管理器拖出部件。
      </p>
      <div className="flex w-[64px] items-center gap-[2px] pl-[4px] font-['Liberation_Serif',serif] text-white">
        <button type="button" aria-label="放大字体" className="text-[8px] font-bold">A</button>
        <button type="button" aria-label="缩小字体" className="mr-[2px] font-bold">A</button>
        <button type="button" aria-label="折叠"><Icon name="collapse" className="size-[6px]" /></button>
        <button type="button" aria-label="选项"><Icon name="menuDown" className="size-[6px]" /></button>
        <button type="button" aria-label="固定"><Icon name="pin" className="size-[6px]" /></button>
        <button type="button" aria-label="关闭提示条"><Icon name="close" className="size-[6px]" /></button>
      </div>
    </div>
  );
}

const viewTools = [
  { icon: "arrowRight", label: "执行" },
  { icon: "fit", label: "缩放区域" },
  { icon: "zoomGlass", label: "缩放视图" },
  { icon: "fitAll", label: "适合窗口" },
  { icon: "pan", label: "平移" },
  { icon: "orbit", label: "旋转" },
  { icon: "lookAt", label: "正视于" },
  { icon: "views", label: "视图方向" },
  { icon: "style", label: "视图样式" },
  { icon: "selectStyle", label: "选择样式" },
];

function StatusBar() {
  return (
    <footer className="flex h-[10px] shrink-0 items-center bg-linear-to-b from-[#484848] to-[#333] text-[#eee]">
      <span className="h-[8px] flex-1 border-r border-[#ddd]" />
      <span className="h-[8px] w-[133px] border-r border-[#ddd] text-center leading-[8px]">选择了 0 项</span>
      <input
        aria-label="查找命令"
        placeholder="查找命令"
        className="ml-[12px] h-[10px] w-[71px] bg-white px-[2px] text-black placeholder:text-[#a8a8a8]"
      />
      <div className="flex w-[111px] justify-between px-[1px]">
        {viewTools.map((v) => (
          <button key={v.icon} type="button" aria-label={v.label} className="flex">
            <Icon name={v.icon} className="size-[9px]" />
          </button>
        ))}
      </div>
      <button type="button" aria-label="缩小" className="ml-[2px]"><Icon name="minus" className="size-[8px]" /></button>
      <input
        type="range"
        aria-label="缩放"
        defaultValue={47}
        className="h-[8px] w-[58px] appearance-none bg-transparent bg-linear-to-r from-[#d5d5d5] to-[#d5d5d5] bg-[length:100%_1px] bg-center bg-no-repeat [&::-webkit-slider-thumb]:h-[8px] [&::-webkit-slider-thumb]:w-[5px] [&::-webkit-slider-thumb]:appearance-none [&::-webkit-slider-thumb]:rounded-b-[3px] [&::-webkit-slider-thumb]:bg-[#9db9d8]"
      />
      <button type="button" aria-label="放大"><Icon name="plus" className="size-[8px]" /></button>
      <div className="ml-[3px] flex gap-[4px]">
        <button type="button" aria-label="视频"><Icon name="video" className="size-[8px]" /></button>
        <button type="button" aria-label="录制"><Icon name="record" className="size-[8px]" /></button>
        <button type="button" aria-label="用户"><Icon name="person" className="size-[8px]" /></button>
      </div>
    </footer>
  );
}

export default function App() {
  return (
    <div className="flex h-screen min-h-[360px] flex-col overflow-hidden bg-[#6f6f6f] font-['Noto_Sans','Noto_Sans_CJK_SC',sans-serif] text-[6px] leading-[8px] [&_button]:leading-none [&_svg]:block">
      <Header />
      <Ribbon />
      <CommandStrip />
      <Workspace />
      <PromptBar />
      <StatusBar />
    </div>
  );
}
